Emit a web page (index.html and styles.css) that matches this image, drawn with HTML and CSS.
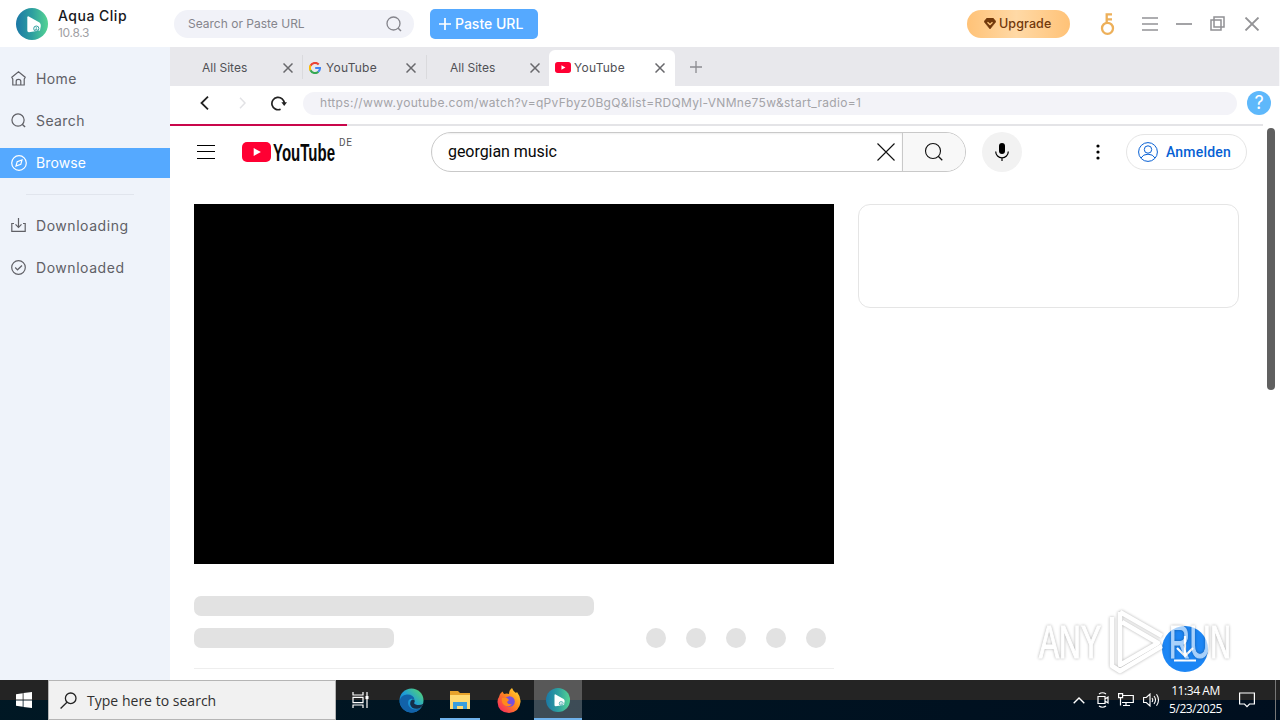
FILE: index.html
```html
<!DOCTYPE html>
<html lang="en">
<head>
<meta charset="utf-8">
<title>Aqua Clip</title>
<link rel="stylesheet" href="styles.css">
</head>
<body>
<svg width="0" height="0" class="defs">
  <defs>
    <linearGradient id="aqua" x1="0" x2="1"><stop offset="0" stop-color="#1b78a6"/><stop offset=".5" stop-color="#2d9f9f"/><stop offset="1" stop-color="#55d493"/></linearGradient>
    <linearGradient id="edge" x1="0" y1="1" x2="1" y2="0"><stop offset="0" stop-color="#0c62b5"/><stop offset=".5" stop-color="#1e9ed8"/><stop offset="1" stop-color="#5ddc62"/></linearGradient>
    <linearGradient id="fire" x1="1" y1="0" x2="0" y2="1"><stop offset="0" stop-color="#ffe536"/><stop offset=".45" stop-color="#ff8a1c"/><stop offset="1" stop-color="#f5156c"/></linearGradient>
    <symbol id="app" viewBox="0 0 32 32"><circle cx="16" cy="16" r="16" fill="url(#aqua)"/><path d="M12.8 8.5 L23.5 14.5 Q25 15.5 24.8 18 L24 22.5 L13 24.3 Q11.3 24.4 11.3 22.5 V9.4 Q11.4 8 12.8 8.5Z" fill="#fff"/><circle cx="20.3" cy="20.6" r="2.6" fill="#fff" stroke="#2d9f9f"/><path d="M20.3 19v3M19 20.9l1.3 1.3 1.3-1.3" fill="none" stroke="#2d9f9f" stroke-width=".7"/></symbol>
    <symbol id="close" viewBox="0 0 10 10"><path d="M.5 .5l9 9M9.500 .5l-9 9" stroke="#68686c" stroke-width="1.5"/></symbol>
    <symbol id="yt" viewBox="0 0 29 20"><rect width="29" height="20" rx="5" fill="#ff0033"/><path d="M11.700 6l7.200 4-7.200 4z" fill="#fff"/></symbol>
    <symbol id="lens" viewBox="0 0 16 16"><circle cx="7.500" cy="7.500" r="6.500" fill="none" stroke="currentColor" stroke-width="1.300"/><path d="M12 12l3 3" stroke="currentColor" stroke-width="1.500"/></symbol>
  </defs>
</svg>
<div class="screen">
  <header class="topbar">
    <div class="brand">
      <svg class="logo" width="32" height="32"><use href="#app"/></svg>
      <div class="names"><div class="name">Aqua Clip</div><div class="version">10.8.3</div></div>
    </div>
    <div class="search"><span>Search or Paste URL</span><svg width="16" height="16"><use href="#lens"/></svg></div>
    <div class="paste"><svg width="12" height="12"><path d="M6 0v12M0 6h12" stroke="#fff" stroke-width="1.700"/></svg><span>Paste URL</span></div>
    <div class="grow"></div>
    <div class="upgrade"><svg width="12" height="11"><path d="M3 0h6l3 3.600L6 11 0 3.600z" fill="#71380b" stroke="#71380b" stroke-width=".6" stroke-linejoin="round"/><path d="M3.500 4.200L6 6.500l2.500-2.300" fill="none" stroke="#ffc77c" stroke-width="1.300"/></svg><span>Upgrade</span></div>
    <div class="window-icons">
      <svg width="15" height="22" viewBox="0 0 15 22" fill="none" stroke="#edb05a" stroke-width="2.300"><circle cx="7.500" cy="15.300" r="5.500"/><path d="M6.700 10V1.300H12M6.700 6.300H12"/></svg>
      <svg width="16" height="14"><path d="M0 1h16M0 7h16M0 13h16" stroke="#939396" stroke-width="1.700"/></svg>
      <svg width="16" height="14"><path d="M0 7h16" stroke="#939396" stroke-width="1.700"/></svg>
      <svg width="15" height="15" fill="none" stroke="#909094" stroke-width="1.500"><path d="M4 1h10v10H4zM4 4H1v10h10v-3M4.500 4H11v7"/></svg>
      <svg width="16" height="14"><path d="M1.500 .5l13 13M14.500 .5l-13 13" stroke="#939396" stroke-width="1.800"/></svg>
    </div>
  </header>
  <div class="middle">
    <nav class="sidebar">
      <div class="item home"><svg width="15" height="15" fill="none" stroke="currentColor" stroke-width="1.200"><path d="M.8 6.200L7.500 .8l6.700 5.400-1 2V14H1.800V8.200zM5.200 14v-3.700q0-2 2.300-2t2.300 2V14"/></svg><span>Home</span></div>
      <div class="item find"><svg width="15" height="15"><use href="#lens"/></svg><span>Search</span></div>
      <div class="item active browse"><svg width="16" height="16" fill="none" stroke="currentColor" stroke-width="1.200"><circle cx="8" cy="8" r="7.300"/><path d="M5 11l1.200-4.300L11 5 9.800 9.300z"/></svg><span>Browse</span></div>
      <div class="rule"></div>
      <div class="item downloading"><svg width="15" height="15" fill="none" stroke="currentColor" stroke-width="1.200"><path d="M3 5.500H.8v7.800h13.400V5.500H12M7.500 0v9M4.500 6.300l3 3 3-3"/></svg><span>Downloading</span></div>
      <div class="item downloaded"><svg width="15" height="15" fill="none" stroke="currentColor" stroke-width="1.200"><circle cx="7.500" cy="7.500" r="6.800"/><path d="M4.200 7.500l2.300 2.300 4.500-4.300"/></svg><span>Downloaded</span></div>
    </nav>
    <main class="browser">
      <div class="tabs">
        <div class="tab plain"><span>All Sites</span><svg width="10" height="10"><use href="#close"/></svg></div>
        <div class="tab divided"><svg class="favicon" width="12" height="12" viewBox="0 0 12 12" fill="none" stroke-width="2.100"><path d="M9.700 2.500A5 5 0 0 0 1.500 3.800" stroke="#ea4335"/><path d="M1.500 3.600A5 5 0 0 0 1.500 8.400" stroke="#fbbc05"/><path d="M1.500 8.300A5 5 0 0 0 9.400 9.700" stroke="#34a853"/><path d="M9.200 9.800A5 5 0 0 0 11 6H6.200" stroke="#4285f4"/></svg><span>YouTube</span><svg width="10" height="10"><use href="#close"/></svg></div>
        <div class="tab plain divided"><span>All Sites</span><svg width="10" height="10"><use href="#close"/></svg></div>
        <div class="tab current"><svg class="favicon" width="16" height="11"><use href="#yt"/></svg><span>YouTube</span><svg width="10" height="10"><use href="#close"/></svg></div>
        <svg class="newtab" width="12" height="12"><path d="M6 0v12M0 6h12" stroke="#8b8b90" stroke-width="1.300"/></svg>
      </div>
      <div class="addressbar">
        <svg width="9" height="14" fill="none" stroke="#222"><path d="M8 .7L1.500 7 8 13.300" stroke-width="1.800"/></svg>
        <svg class="forward" width="7" height="12" fill="none"><path d="M1 .7L6 6 1 11.300" stroke="#e2e2e5" stroke-width="1.500"/></svg>
        <svg class="reload" width="16" height="15" fill="none" stroke="#222"><path d="M9.600 13.200A6.200 6.200 0 1 1 13.300 7.500" stroke-width="1.700"/><path d="M10.400 6.300h5.600l-2.800 3.700z" fill="#222" stroke="none"/></svg>
        <div class="url"><span>https://www.youtube.com/watch?v=qPvFbyz0BgQ&amp;list=RDQMyl-VNMne75w&amp;start_radio=1</span></div>
        <div class="help">?</div>
      </div>
      <div class="progress"><div class="loaded"></div></div>
      <div class="page">
        <div class="masthead">
          <svg class="burger" width="18" height="14"><path d="M0 .5h18M0 6.500h18M0 13.500h18" stroke="#000"/></svg>
          <svg class="ytlogo" width="112" height="34"><use href="#yt" x="0" y="9" width="29" height="20"/><text class="wordmark" x="31" y="27.500" textLength="62" lengthAdjust="spacingAndGlyphs">YouTube</text><text class="country" x="97" y="13" textLength="13">DE</text></svg>
          <div class="query"><div class="entry"><span>georgian music</span><svg width="18" height="18"><path d="M.5 .5l17 17M17.500 .5l-17 17" stroke="#111" stroke-width="1.100"/></svg></div><div class="go"><svg width="20" height="20" viewBox="0 0 16 16"><circle cx="7.200" cy="7.200" r="6" fill="none" stroke="#111" stroke-width=".9"/><path d="M11.400 11.400l3.200 3.200" stroke="#111"/></svg></div></div>
          <div class="mic"><svg width="16" height="20"><rect x="5" y="1" width="6" height="11" rx="3"/><path d="M1.700 9.500a6.300 6.300 0 0 0 12.600 0M8 15.800V19" fill="none" stroke="#000" stroke-width="1.200"/></svg></div>
          <svg class="dots" width="4" height="16"><circle cx="2" cy="2" r="1.600"/><circle cx="2" cy="8" r="1.600"/><circle cx="2" cy="14" r="1.600"/></svg>
          <div class="signin"><svg width="20" height="20" fill="none" stroke="#065fd4"><circle cx="10" cy="10" r="9.400"/><circle cx="10" cy="7.500" r="3.700"/><path d="M3 16q2-3.800 7-3.800t7 3.800"/></svg><span>Anmelden</span></div>
        </div>
        <div class="content">
          <div class="watch">
            <div class="video"></div>
            <div class="bone title"></div>
            <div class="meta"><div class="bone owner"></div><div class="circles"><i></i><i></i><i></i><i></i><i></i></div></div>
            <div class="line"></div>
          </div>
          <div class="playlist"></div>
        </div>
      </div>
      <div class="scrollbar"></div>
      <div class="download"><svg width="24" height="26" fill="none" stroke="#fff" stroke-width="2.200"><path d="M12 0v19M4 12l8 8 8-8M1 24.500h22"/></svg></div>
      <svg class="watermark" width="204" height="68" viewBox="0 0 204 68">
        <g class="letters">
          <text x="6" y="50" textLength="62" lengthAdjust="spacingAndGlyphs">ANY</text>
          <text x="136" y="50" textLength="62" lengthAdjust="spacingAndGlyphs">RUN</text>
        </g>
        <g class="mark">
          <path d="M87 4L129 28M87 4V57L125 35L89 14"/>
          <path d="M79 9V58L87 63L129 38"/>
        </g>
      </svg>
    </main>
  </div>
  <footer class="taskbar">
    <div class="start"><svg width="16" height="16" fill="#fff"><path d="M0 2.200L6.700 1.200V7.600H0zM7.500 1.100L16 0V7.600H7.500zM0 8.400h6.700v6.400L0 13.800zM7.500 8.400H16V16l-8.500-1.100z"/></svg></div>
    <div class="type"><svg width="17" height="17" fill="none" stroke="#222" stroke-width="1.300"><circle cx="10.700" cy="6.300" r="5.300"/><path d="M7 10.300L.6 16.500"/></svg><span>Type here to search</span></div>
    <div class="task"><svg width="17" height="16" fill="none" stroke="#fff" stroke-width="1.200"><path d="M1 0v3h10V0M1 16v-3h10v3M1 5.300h10v5.400H1zM15 0v16"/><path d="M13.500 5.500h3" stroke-width="3"/></svg></div>
    <div class="task wide"><svg width="25" height="25"><circle cx="12.500" cy="12.500" r="12" fill="url(#edge)"/><path d="M.7 14Q1 7 8 6.500q7 0 7.500 5.500-3.500-2.600-6 .5-2 6 4 8.500 4.500 1.300 8.500-1.500-4 6-11 5Q2 22.500.7 14" fill="#1262a9"/><path d="M13.500 11.500q2.500 0 2.200 2.200-1.500 2 1 2.800 4 1.500 8-1-1.500 4-5 5-7 1.300-8.500-4-.3-4 2.300-5" fill="#152e49"/></svg></div>
    <div class="task wide open"><svg width="22" height="20"><path d="M1 1h8l2 2h10v16H1z" fill="#e7a32b"/><path d="M1 5h20v14H1z" fill="#ffda72"/><path d="M4 19v-7h14v7h-4v-3H8v3z" fill="#3b9edc"/></svg></div>
    <div class="task wide"><svg width="24" height="25"><path d="M2 9Q3 5 5.500 3.500L7 6Q10 5 12 6q0-4 3-6 1 3 4 5l1-1q4 5 3.500 10-1 10-11.500 11Q1 24.500.5 14 .4 11 2 9" fill="url(#fire)"/><circle cx="12.500" cy="13.500" r="5.300" fill="#7750dc"/><path d="M5 10l5 0 2 2-2 2q1 3 5 2-3 4-8 1-3-3-2-7" fill="#ff8a1c"/></svg></div>
    <div class="task wide open focus"><svg width="24" height="24"><use href="#app"/></svg></div>
    <div class="grow"></div>
    <div class="tray">
      <svg width="12" height="7"><path d="M.7 6.300L6 1l5.300 5.300" fill="none" stroke="#fff" stroke-width="1.400"/></svg>
      <svg width="12" height="16" fill="none" stroke="#fff" stroke-width="1.200"><path d="M2 2q3.500-2.500 7 0M2 14q3.500 2.500 7 0M1 4.500h7v7H1zM8 7l3-2v6L8 9"/></svg>
      <svg width="16" height="14" fill="none" stroke="#fff" stroke-width="1.200"><path d="M5 2.500h10.300v7H4M8 9.500v3M5 12.500h7M.6 .6h4v4h-4zM2.500 4.500v8"/></svg>
      <svg width="17" height="14" fill="none" stroke="#fff" stroke-width="1.100"><path d="M.6 4.500h2.700L7 1v12L3.300 9.500H.6zM9 5q1.500 2 0 4M11 3q3 4 0 8M13.500 1.300q4 5.700 0 11.400"/></svg>
    </div>
    <div class="clock"><div class="time">11:34 AM</div><div class="date">5/23/2025</div></div>
    <svg class="notice" width="16" height="16" fill="none" stroke="#fff" stroke-width="1.200"><path d="M.6 1h14.800v11H10.500L8 14.700 5.500 12H.6z"/></svg>
    <div class="peek"></div>
  </footer>
</div>
</body>
</html>
```
FILE: styles.css
```css
* { box-sizing: border-box; }
body { margin: 0; font-family: Inter, "Open Sans", sans-serif; background: #fff; }
svg { display: block; flex: none; }
span { white-space: nowrap; }
.defs { position: absolute; }
.screen { width: 1280px; height: 720px; display: flex; flex-direction: column; overflow: hidden; }
.grow { flex: 1; }

.topbar { height: 47px; display: flex; align-items: center; flex: none; }
.brand { width: 174px; padding-left: 16px; display: flex; gap: 10px; align-items: center; }
.name { font-size: 14px; line-height: 18px; font-weight: 500; color: #18181c; letter-spacing: .5px; }
.version { font-size: 12px; line-height: 16px; color: #a0a0a4; letter-spacing: -.3px; }
.search { width: 240px; height: 28px; border-radius: 14px; background: #f1f2f8; padding: 0 12px 0 14px; display: flex; align-items: center; justify-content: space-between; font-size: 12px; color: #85858c; margin-right: 16px; }
.paste { width: 108px; height: 30px; border-radius: 5px; background: #55a9ff; color: #fff; display: flex; align-items: center; gap: 4px; padding-left: 9px; font-size: 14px; font-weight: 500; }
.upgrade { width: 103px; height: 28px; border-radius: 14px; background: linear-gradient(90deg, #ffc277, #ffd9a6 48%, #ffc277); color: #71380b; display: flex; align-items: center; gap: 3px; padding-left: 17px; font-size: 12.5px; font-weight: 500; letter-spacing: .1px; margin-right: 30px; }
.window-icons { display: flex; align-items: center; gap: 18px; padding-right: 20px; }
.window-icons svg:first-child { margin-right: 9px; }
.window-icons svg:nth-last-child(2) { margin-right: 1px; }

.middle { height: 633px; display: flex; }
.sidebar { width: 170px; background: #eff3fa; padding-top: 17px; color: #606066; flex: none; }
.item { height: 30px; margin-bottom: 12px; display: flex; align-items: center; gap: 10px; padding: 0 0 1px 11px; font-size: 14px; }
.active { background: #55a9ff; color: #fff; }
.active span { margin-left: -1px; }
.rule { width: 108px; height: 1px; background: #e1e5ed; margin: 16px 0 16px 26px; }
.home { letter-spacing: .4px; }
.find { letter-spacing: .4px; }
.browse { letter-spacing: .1px; }
.downloading { letter-spacing: .55px; }
.downloaded { letter-spacing: .55px; }

.browser { width: 1110px; position: relative; }
.tabs { height: 39px; background: #e8e8ec; display: flex; align-items: center; border-right: 1px solid #f8f8fa; }
.tab { width: 124px; height: 24px; display: flex; align-items: center; font-size: 12px; color: #505055; padding: 2px 10px 0 14px; letter-spacing: .25px; }
.tab span { flex: 1; }
.tab:first-child { width: 132px; padding: 2px 9px 0 32px; letter-spacing: 0; }
.tab.plain:not(:first-child) { padding-left: 23px; letter-spacing: 0; }
.divided { border-left: 1px solid #dadadd; padding-left: 6px; }
.tab .favicon { margin-right: 5px; }
.current { width: 126px; height: 36px; margin: 3px 15px 0 -1px; padding: 0 10px 1px 6px; background: #fff; border-radius: 6px 6px 0 0; }
.current .favicon { margin-right: 3px; }
.newtab { margin-top: 0; }

.addressbar { height: 38px; display: flex; align-items: center; padding: 0 8px 4px 30px; }
.forward { margin-left: 30px; }
.reload { margin-left: 25px; }
.url { width: 934px; height: 23px; border-radius: 12px; background: #f3f3f8; margin-left: 16px; padding-left: 17px; font-size: 12px; line-height: 21px; color: #a4a4a8; letter-spacing: .32px; }
.help { width: 24px; height: 24px; border-radius: 50%; background: #5eb8fb; color: #fff; text-align: center; font-size: 18px; line-height: 24px; margin-left: 10px; }
.progress { height: 2px; width: 1093px; background: #e4e4e7; }
.loaded { width: 177px; height: 2px; background: #c9064b; }

.page { font-family: Roboto, sans-serif; }
.masthead { height: 52px; display: flex; align-items: center; padding: 0 33px 0 27px; }
.ytlogo { margin: -4px 77px 0 27px; }
.wordmark { font: bold 23px "Liberation Sans", sans-serif; fill: #080808; }
.country { font: 10px Roboto, sans-serif; fill: #555; }
.query { width: 535px; height: 40px; display: flex; border: 1px solid #c9c9c9; border-radius: 20px; overflow: hidden; }
.entry { width: 471px; padding: 0 7px 0 16px; display: flex; align-items: center; justify-content: space-between; font-size: 16px; letter-spacing: -.05px; color: #080808; border-right: 1px solid #c9c9c9; box-shadow: inset 0 1px 2px #eee; }
.entry span { margin-top: -2px; }
.go { flex: 1; background: #f8f8f8; display: flex; align-items: center; justify-content: center; }
.mic { width: 40px; height: 40px; border-radius: 50%; margin-left: 16px; background: #f2f2f2; display: flex; align-items: center; justify-content: center; }
.dots { margin-left: 74px; }
.signin { width: 121px; height: 36px; border: 1px solid #e5e5e5; border-radius: 18px; margin-left: 26px; display: flex; align-items: center; gap: 8px; padding-left: 11px; color: #065fd4; font-size: 14px; font-weight: 500; letter-spacing: .2px; }
.content { display: flex; align-items: flex-start; gap: 24px; padding: 26px 0 0 24px; }
.watch { width: 640px; }
.video { height: 360px; background: #000; }
.bone { background: #e2e2e2; height: 20px; border-radius: 7px; }
.title { width: 400px; margin: 32px 0 12px; }
.meta { display: flex; justify-content: space-between; padding-right: 8px; }
.owner { width: 200px; }
.circles { display: flex; gap: 20px; }
.circles i { width: 20px; height: 20px; border-radius: 50%; background: #e2e2e2; }
.line { height: 1px; margin-top: 20px; background: #eee; }
.playlist { width: 381px; height: 104px; border: 1px solid #e5e5e5; border-radius: 12px; }
.scrollbar { position: absolute; right: 5px; top: 81px; width: 8px; height: 262px; border-radius: 4px; background: #606060; }
.download { position: absolute; left: 992px; top: 579px; width: 46px; height: 46px; border-radius: 50%; background: #1c86f5; display: flex; align-items: center; justify-content: center; }
.watermark { position: absolute; left: 863px; top: 561px; opacity: .62; filter: drop-shadow(0 0 1.5px rgba(0, 0, 0, .5)); }
.watermark text { font: 46px "Liberation Sans", sans-serif; }
.letters { fill: #fff; stroke: #fff; stroke-width: 1.2; }
.mark { fill: none; stroke: #fff; stroke-width: 4.5; stroke-linejoin: round; }

.taskbar { height: 40px; display: flex; align-items: center; background: linear-gradient(90deg, rgba(0, 30, 40, .55), rgba(0, 10, 30, .2)) 0 20px / 100% 20px no-repeat, linear-gradient(#242424 0 20px, #00101f 20px); color: #fff; font-family: "Open Sans", "Noto Sans", sans-serif; }
.start { width: 48px; display: flex; justify-content: center; }
.type { width: 288px; height: 40px; background: #f1f1f1; border: 1px solid #b5b5b5; color: #303030; display: flex; align-items: center; gap: 10px; padding-left: 11px; font-size: 14px; letter-spacing: .02px; }
.task { width: 48px; height: 40px; display: flex; align-items: center; justify-content: center; }
.wide { width: 49px; }
.task:nth-child(4) { margin-left: 3px; }
.open { width: 40px; margin: 0 4px; border-bottom: 2px solid #6eb2ec; padding-top: 2px; }
.focus { width: 48px; margin: 0 0 0 1px; background: rgba(255, 255, 255, .24); }
.tray { display: flex; align-items: center; gap: 9px; margin-right: 9px; }
.tray svg:first-child { margin-right: 3px; }
.clock { width: 53px; font-size: 12px; line-height: 18px; text-align: center; letter-spacing: -.42px; }
.clock div { white-space: nowrap; }
.notice { margin-left: 17px; }
.peek { width: 1px; height: 40px; background: #777; margin: 0 4px 0 20px; }
```
